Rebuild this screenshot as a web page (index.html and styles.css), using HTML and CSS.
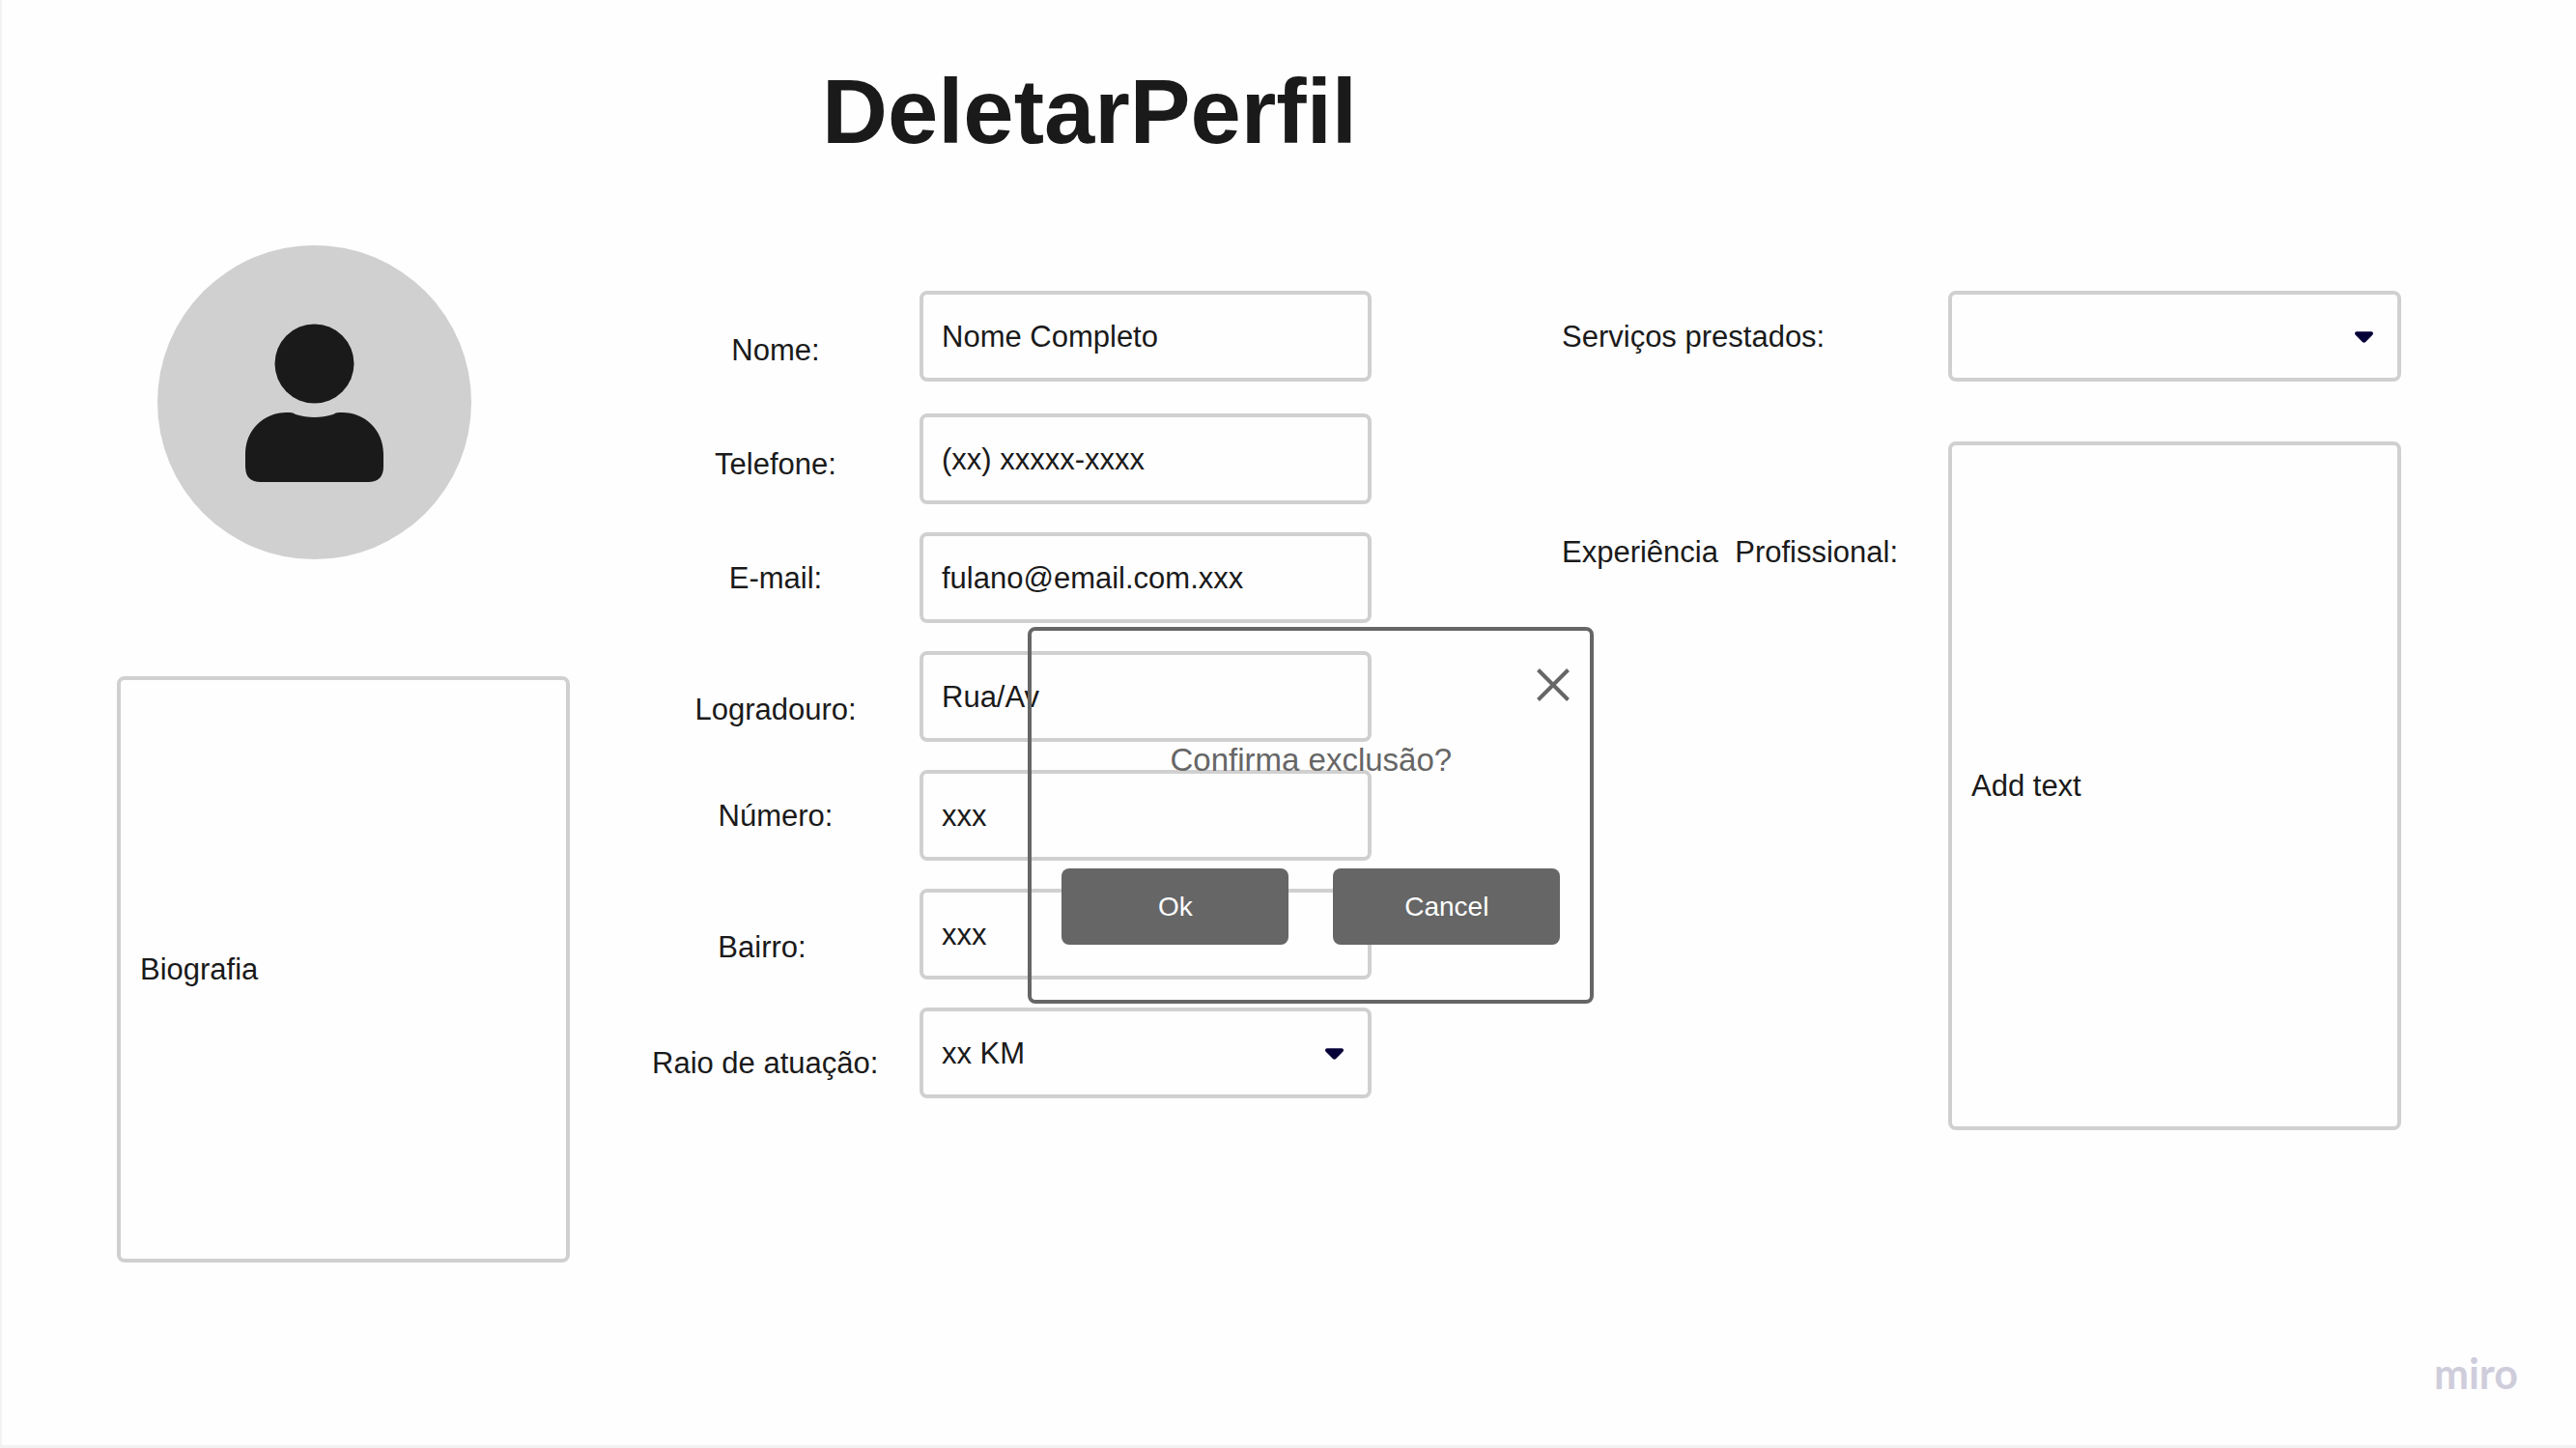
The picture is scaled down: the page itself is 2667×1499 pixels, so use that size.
FILE: index.html
```html
<!DOCTYPE html>
<html lang="pt-BR">
<head>
  <meta charset="utf-8">
  <meta name="viewport" content="width=device-width, initial-scale=1">
  <title>DeletarPerfil</title>
  <link rel="stylesheet" href="styles.css">
</head>
<body>
  <div class="page">
    <header class="grid header">
      <h1 class="title">DeletarPerfil</h1>
    </header>

    <main class="grid">
      <section class="profile">
        <svg class="avatar" viewBox="0 0 325 325" role="img" aria-label="Foto do perfil">
          <circle cx="162.500" cy="162.500" r="162.500" fill="#d0d0d0"/>
          <circle cx="162.500" cy="122.500" r="41" fill="#1a1a1a"/>
          <path fill="#1a1a1a" d="M91 216 C91 191 110 173 134 173 C138 173 140 173 143 175 C156 179 169 179 182 175 C185 173 187 173 191 173 C215 173 234 191 234 216 L234 229 Q234 245 218 245 L107 245 Q91 245 91 229 Z"/>
        </svg>
        <div class="area area-bio">
          <textarea class="area-text" rows="1" aria-label="Biografia">Biografia</textarea>
        </div>
      </section>

      <div class="labels">
        <label for="nome">Nome:</label>
        <label for="telefone">Telefone:</label>
        <label for="email">E-mail:</label>
        <label for="logradouro">Logradouro:</label>
        <label for="numero">Número:</label>
        <label class="label-short" for="bairro">Bairro:</label>
        <label class="label-long" for="raio">Raio de atuação:</label>
      </div>

      <div class="fields">
        <input class="control" id="nome" type="text" value="Nome Completo">
        <input class="control" id="telefone" type="tel" value="(xx) xxxxx-xxxx">
        <input class="control" id="email" type="email" value="fulano@email.com.xxx">
        <input class="control" id="logradouro" type="text" value="Rua/Av">
        <input class="control" id="numero" type="text" value="xxx">
        <input class="control" id="bairro" type="text" value="xxx">
        <div class="select">
          <select class="control" id="raio"><option>xx KM</option></select>
          <svg class="caret" viewBox="0 0 20 12" aria-hidden="true"><path d="M2 0H18Q20 0 20 2Q20 3 18 5L12 11Q10 13 8 11L2 5Q0 3 0 2Q0 0 2 0Z"/></svg>
        </div>

        <dialog class="dialog" open aria-labelledby="mensagem">
          <button class="close" type="button" aria-label="Fechar">
            <svg class="close-icon" viewBox="0 0 34 34" aria-hidden="true"><path d="M1.500 1.500L32.500 32.500M32.500 1.500L1.500 32.500"/></svg>
          </button>
          <p class="message" id="mensagem">Confirma exclusão?</p>
          <div class="actions">
            <button class="action" type="button">Ok</button>
            <button class="action" type="button">Cancel</button>
          </div>
        </dialog>
      </div>

      <div class="work-labels">
        <label for="servicos">Serviços prestados:</label>
        <label for="experiencia">Experiência  Profissional:</label>
      </div>

      <div class="work-fields">
        <div class="select">
          <select class="control" id="servicos"><option></option></select>
          <svg class="caret" viewBox="0 0 20 12" aria-hidden="true"><path d="M2 0H18Q20 0 20 2Q20 3 18 5L12 11Q10 13 8 11L2 5Q0 3 0 2Q0 0 2 0Z"/></svg>
        </div>
        <div class="area area-work">
          <textarea class="area-text" id="experiencia" rows="1">Add text</textarea>
        </div>
      </div>
    </main>

    <footer class="footer">miro</footer>
  </div>
</body>
</html>
```
FILE: styles.css
```css
* {
  box-sizing: border-box;
}

body {
  margin: 0;
  background: #fefefe;
  color: #1a1a1a;
  font-family: "Liberation Sans", Arial, sans-serif;
  font-size: 31px;
  line-height: 36px;
}

.page {
  display: flex;
  flex-direction: column;
  min-height: 100vh;
  border-left: 2px solid #f2f2f2;
  border-bottom: 3px solid #f2f2f2;
}

.grid {
  display: grid;
  grid-template-columns:
    119fr [profile] 469fr 83fr [labels] 260fr 19fr [fields] 468fr
    197fr [work-labels] 400fr [work-fields] 469fr 181fr;
}

.header {
  padding: 62px 0 84px;
}

.title {
  grid-column: labels / work-labels;
  justify-self: center;
  margin: 0;
  padding-right: 34px;
  font-size: 94px;
  line-height: 108px;
}

/* Profile column */

.profile {
  grid-column: profile;
  display: flex;
  flex-direction: column;
  gap: 121px;
}

.avatar {
  width: 325px;
  height: 325px;
  margin-left: 42px;
}

.area {
  display: flex;
  align-items: center;
  padding: 0 20px;
  border: 4px solid #d0d0d0;
  border-radius: 8px;
}

.area-bio {
  height: 607px;
}

.area-work {
  height: 713px;
}

.area-text {
  width: 100%;
  padding: 0;
  border: 0;
  background: transparent;
  color: inherit;
  font: inherit;
  resize: none;
  overflow: hidden;
}

/* Personal data */

.labels {
  grid-column: labels;
  display: grid;
  grid-template-rows: 118px 118px 136px 110px 136px 120px 36px;
  align-content: start;
  align-items: start;
  justify-items: center;
  padding-top: 91px;
  white-space: nowrap;
}

.label-short {
  padding-right: 28px;
}

.label-long {
  justify-self: start;
  padding-left: 2px;
}

.fields {
  grid-column: fields;
  position: relative;
  display: grid;
  grid-template-rows: 127px repeat(5, 123px) 94px;
  align-content: start;
  align-items: start;
  padding-top: 47px;
}

.control {
  display: block;
  width: 100%;
  height: 94px;
  margin: 0;
  padding: 2px 19px 0;
  border: 4px solid #d0d0d0;
  border-radius: 8px;
  background: transparent;
  color: inherit;
  font: inherit;
  appearance: none;
}

.select {
  position: relative;
}

.caret {
  position: absolute;
  top: 42px;
  right: 29px;
  width: 19px;
  height: 12px;
  fill: #050038;
  pointer-events: none;
}

/* Professional data */

.work-labels {
  grid-column: work-labels;
  display: flex;
  flex-direction: column;
  gap: 187px;
  padding-top: 77px;
  white-space: pre;
}

.work-fields {
  grid-column: work-fields;
  display: flex;
  flex-direction: column;
  gap: 62px;
  padding-top: 47px;
}

/* Confirmation dialog, laid over the form */

.dialog {
  position: absolute;
  top: 395px;
  left: 24%;
  right: auto;
  display: flex;
  flex-direction: column;
  width: 586px;
  margin: 0;
  padding: 39px 21px 57px;
  border: 4px solid #666;
  border-radius: 8px;
  background: transparent;
  color: #666;
}

.close {
  align-self: flex-end;
  padding: 0;
  border: 0;
  background: transparent;
}

.close-icon {
  display: block;
  width: 34px;
  height: 34px;
  fill: none;
  stroke: #666;
  stroke-width: 4;
}

.message {
  margin: 41px 0 92px;
  font-size: 33px;
  line-height: 40px;
  text-align: center;
}

.actions {
  display: flex;
  gap: 46px;
  padding: 0 10px;
}

.action {
  flex: 1;
  height: 79px;
  padding: 0;
  border: 0;
  border-radius: 8px;
  background: #666;
  color: #fff;
  font-family: inherit;
  font-size: 28px;
}

.footer {
  margin-top: auto;
  padding: 0 60px 50px;
  color: #cfcddb;
  font-family: Lato, sans-serif;
  font-size: 43px;
  font-weight: 700;
  line-height: 48px;
  text-align: right;
}
```
